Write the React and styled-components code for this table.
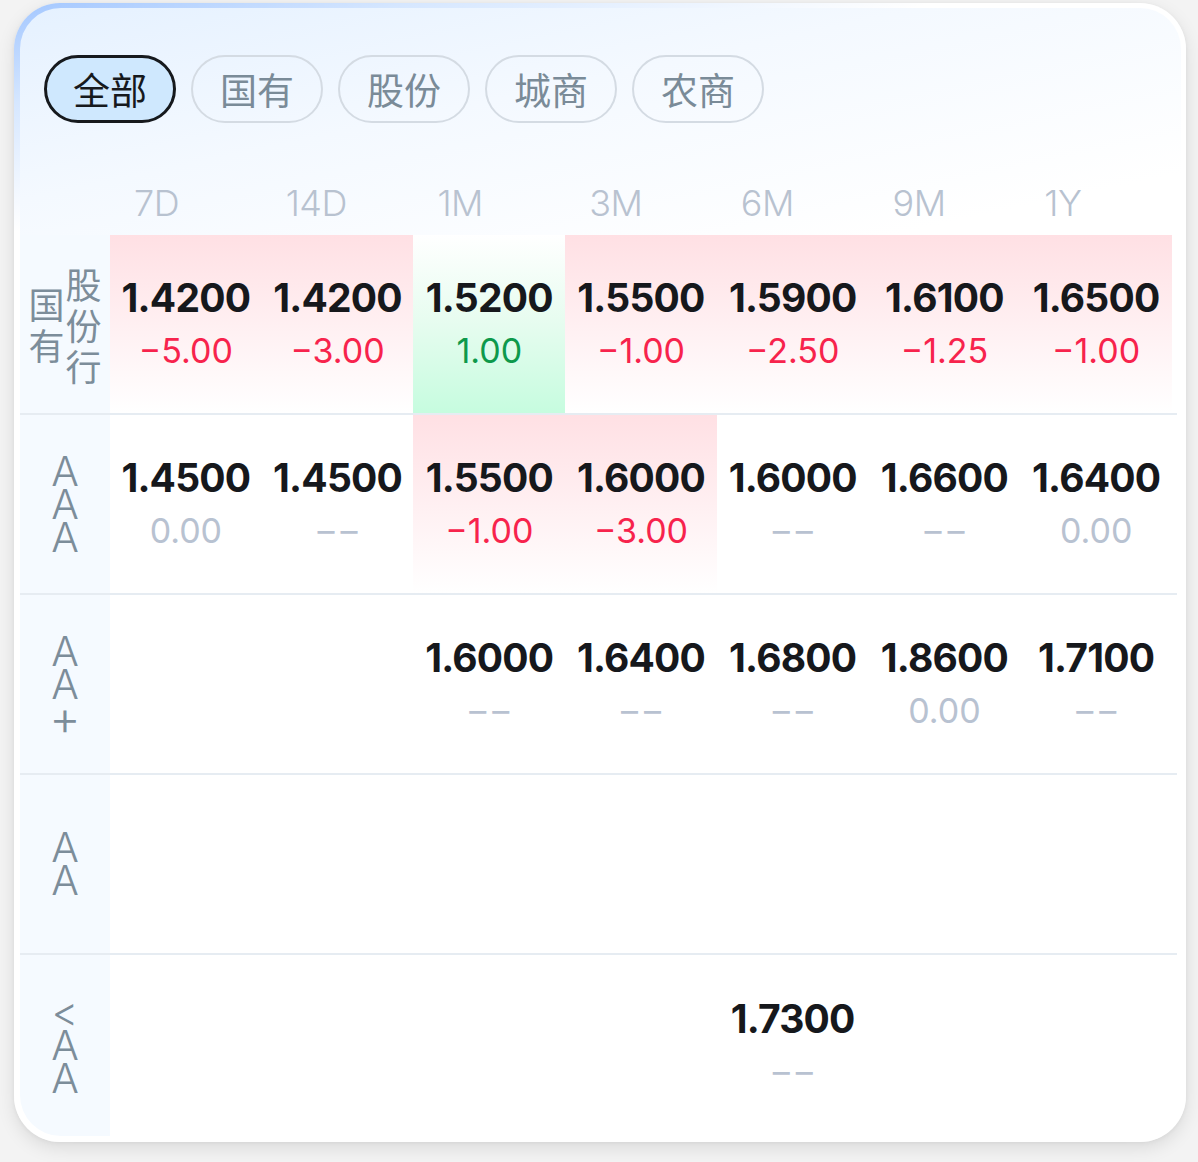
import React, { useState } from "react";
import styled, { createGlobalStyle, css } from "styled-components";

const GlobalStyle = createGlobalStyle`
  html, body { margin: 0; padding: 0; }
  body {
    background: #f3f3f3;
    font-family: Inter, "Noto Sans CJK SC", sans-serif;
  }
  * { box-sizing: border-box; }
`;

const Page = styled.div`
  padding: 3px 12px 21px 14px;
`;

const Card = styled.div`
  border-radius: 46px;
  padding: 5px 5px 6px 6px;
  background: linear-gradient(166deg, #a3c7ff 0%, #d6e7ff 7%, #ffffff 16%);
  box-shadow: 0 6px 18px rgba(0, 0, 0, 0.1), 0 1px 4px rgba(0, 0, 0, 0.05);
`;

const Inner = styled.div`
  border-radius: 41px;
  overflow: hidden;
  padding: 47px 4px 0 0;
  background: linear-gradient(168deg, #e5f1ff 0%, #f4f9ff 14%, #ffffff 30%);
`;

const Tabs = styled.div`
  display: flex;
  gap: 15px;
  padding-left: 24px;
`;

const Tab = styled.button`
  width: 132px;
  height: 68px;
  border-radius: 34px;
  font-family: "Noto Sans CJK SC", sans-serif;
  font-size: 37px;
  line-height: 1;
  padding: 0;
  cursor: pointer;
  display: flex;
  align-items: center;
  justify-content: center;
  ${(p) =>
    p.$active
      ? css`
          background: #cfe8fe;
          border: 3px solid #16191d;
          color: #16191d;
        `
      : css`
          background: transparent;
          border: 2px solid #d4dbe3;
          color: #7a8b98;
        `}
`;

const Table = styled.div`
  margin-top: 48px;
`;

const gridCols = css`
  display: grid;
  grid-template-columns: 90px repeat(7, 1fr);
  padding-right: 5px;
`;

const HeaderRow = styled.div`
  ${gridCols};
  height: 64px;
  align-items: center;
`;

const HeaderCell = styled.div`
  padding-left: 24px;
  font-size: 36px;
  font-weight: 300;
  color: #b8c2d0;
  letter-spacing: -0.5px;
`;

const Row = styled.div`
  ${gridCols};
  height: ${(p) => (p.$last ? "181px" : "180px")};
  border-bottom: ${(p) => (p.$last ? "none" : "2px solid #e6ecf2")};
`;

const LabelCell = styled.div`
  background: #f5faff;
  display: flex;
  align-items: center;
  justify-content: center;
  gap: 1px;
`;

const LabelColumn = styled.div`
  display: flex;
  flex-direction: column;
  align-items: center;
  color: #7c8d9a;
  ${(p) =>
    p.$cjk
      ? css`
          font-family: "Noto Sans CJK SC", sans-serif;
          font-size: 36px;
          line-height: 41px;
        `
      : css`
          font-family: Inter, sans-serif;
          font-weight: 300;
          font-size: 41px;
          line-height: 33px;
        `}
`;

const LabelGlyph = styled.span`
  font-size: ${(p) => (p.$sign ? "48px" : "inherit")};
`;

const bgFor = {
  up: "linear-gradient(180deg, #ffe0e4 0%, #fff1f3 55%, #ffffff 100%)",
  down: "linear-gradient(180deg, #ffffff 0%, #e6fcef 50%, #c6fcdf 100%)",
};

const DataCell = styled.div`
  display: flex;
  flex-direction: column;
  align-items: center;
  justify-content: center;
  gap: 5px;
  background: ${(p) => bgFor[p.$tone] || "transparent"};
`;

const Value = styled.div`
  font-size: 39px;
  font-weight: 700;
  line-height: 48px;
  color: #16181c;
  letter-spacing: -0.8px;
`;

const changeColor = {
  up: "#f7234c",
  down: "#0d994b",
  flat: "#b8c2d1",
  none: "#b8c2d1",
};

const Change = styled.div`
  font-size: 34px;
  font-weight: 400;
  line-height: 48px;
  color: ${(p) => changeColor[p.$tone]};
  letter-spacing: ${(p) => (p.$tone === "none" ? "6px" : "0")};
  margin-right: ${(p) => (p.$tone === "none" ? "-6px" : "0")};
`;

const tabs = ["全部", "国有", "股份", "城商", "农商"];
const cols = ["7D", "14D", "1M", "3M", "6M", "9M", "1Y"];

const c = (v, ch, tone) => ({ v, ch, tone });
const D = "––";

const rows = [
  {
    label: [["国", "有"], ["股", "份", "行"]],
    cjk: true,
    cells: [
      c("1.4200", "−5.00", "up"),
      c("1.4200", "−3.00", "up"),
      c("1.5200", "1.00", "down"),
      c("1.5500", "−1.00", "up"),
      c("1.5900", "−2.50", "up"),
      c("1.6100", "−1.25", "up"),
      c("1.6500", "−1.00", "up"),
    ],
  },
  {
    label: [["A", "A", "A"]],
    cells: [
      c("1.4500", "0.00", "flat"),
      c("1.4500", D, "none"),
      c("1.5500", "−1.00", "up"),
      c("1.6000", "−3.00", "up"),
      c("1.6000", D, "none"),
      c("1.6600", D, "none"),
      c("1.6400", "0.00", "flat"),
    ],
  },
  {
    label: [["A", "A", "+"]],
    cells: [
      null,
      null,
      c("1.6000", D, "none"),
      c("1.6400", D, "none"),
      c("1.6800", D, "none"),
      c("1.8600", "0.00", "flat"),
      c("1.7100", D, "none"),
    ],
  },
  {
    label: [["A", "A"]],
    cells: [null, null, null, null, null, null, null],
  },
  {
    label: [["<", "A", "A"]],
    cells: [null, null, null, null, c("1.7300", D, "none"), null, null],
  },
];

export default function App() {
  const [active, setActive] = useState(0);
  return (
    <>
      <GlobalStyle />
      <Page>
        <Card>
          <Inner>
            <Tabs>
              {tabs.map((t, i) => (
                <Tab key={t} $active={i === active} onClick={() => setActive(i)}>
                  {t}
                </Tab>
              ))}
            </Tabs>
            <Table>
              <HeaderRow>
                <div />
                {cols.map((h) => (
                  <HeaderCell key={h}>{h}</HeaderCell>
                ))}
              </HeaderRow>
              {rows.map((r, ri) => (
                <Row key={ri} $last={ri === rows.length - 1}>
                  <LabelCell>
                    {r.label.map((col, ci) => (
                      <LabelColumn key={ci} $cjk={r.cjk}>
                        {col.map((ch, k) => (
                          <LabelGlyph key={k} $sign={ch === "+"}>
                            {ch}
                          </LabelGlyph>
                        ))}
                      </LabelColumn>
                    ))}
                  </LabelCell>
                  {r.cells.map((cell, ci) =>
                    cell ? (
                      <DataCell key={ci} $tone={cell.tone}>
                        <Value>{cell.v}</Value>
                        <Change $tone={cell.tone}>{cell.ch}</Change>
                      </DataCell>
                    ) : (
                      <DataCell key={ci} />
                    )
                  )}
                </Row>
              ))}
            </Table>
          </Inner>
        </Card>
      </Page>
    </>
  );
}
